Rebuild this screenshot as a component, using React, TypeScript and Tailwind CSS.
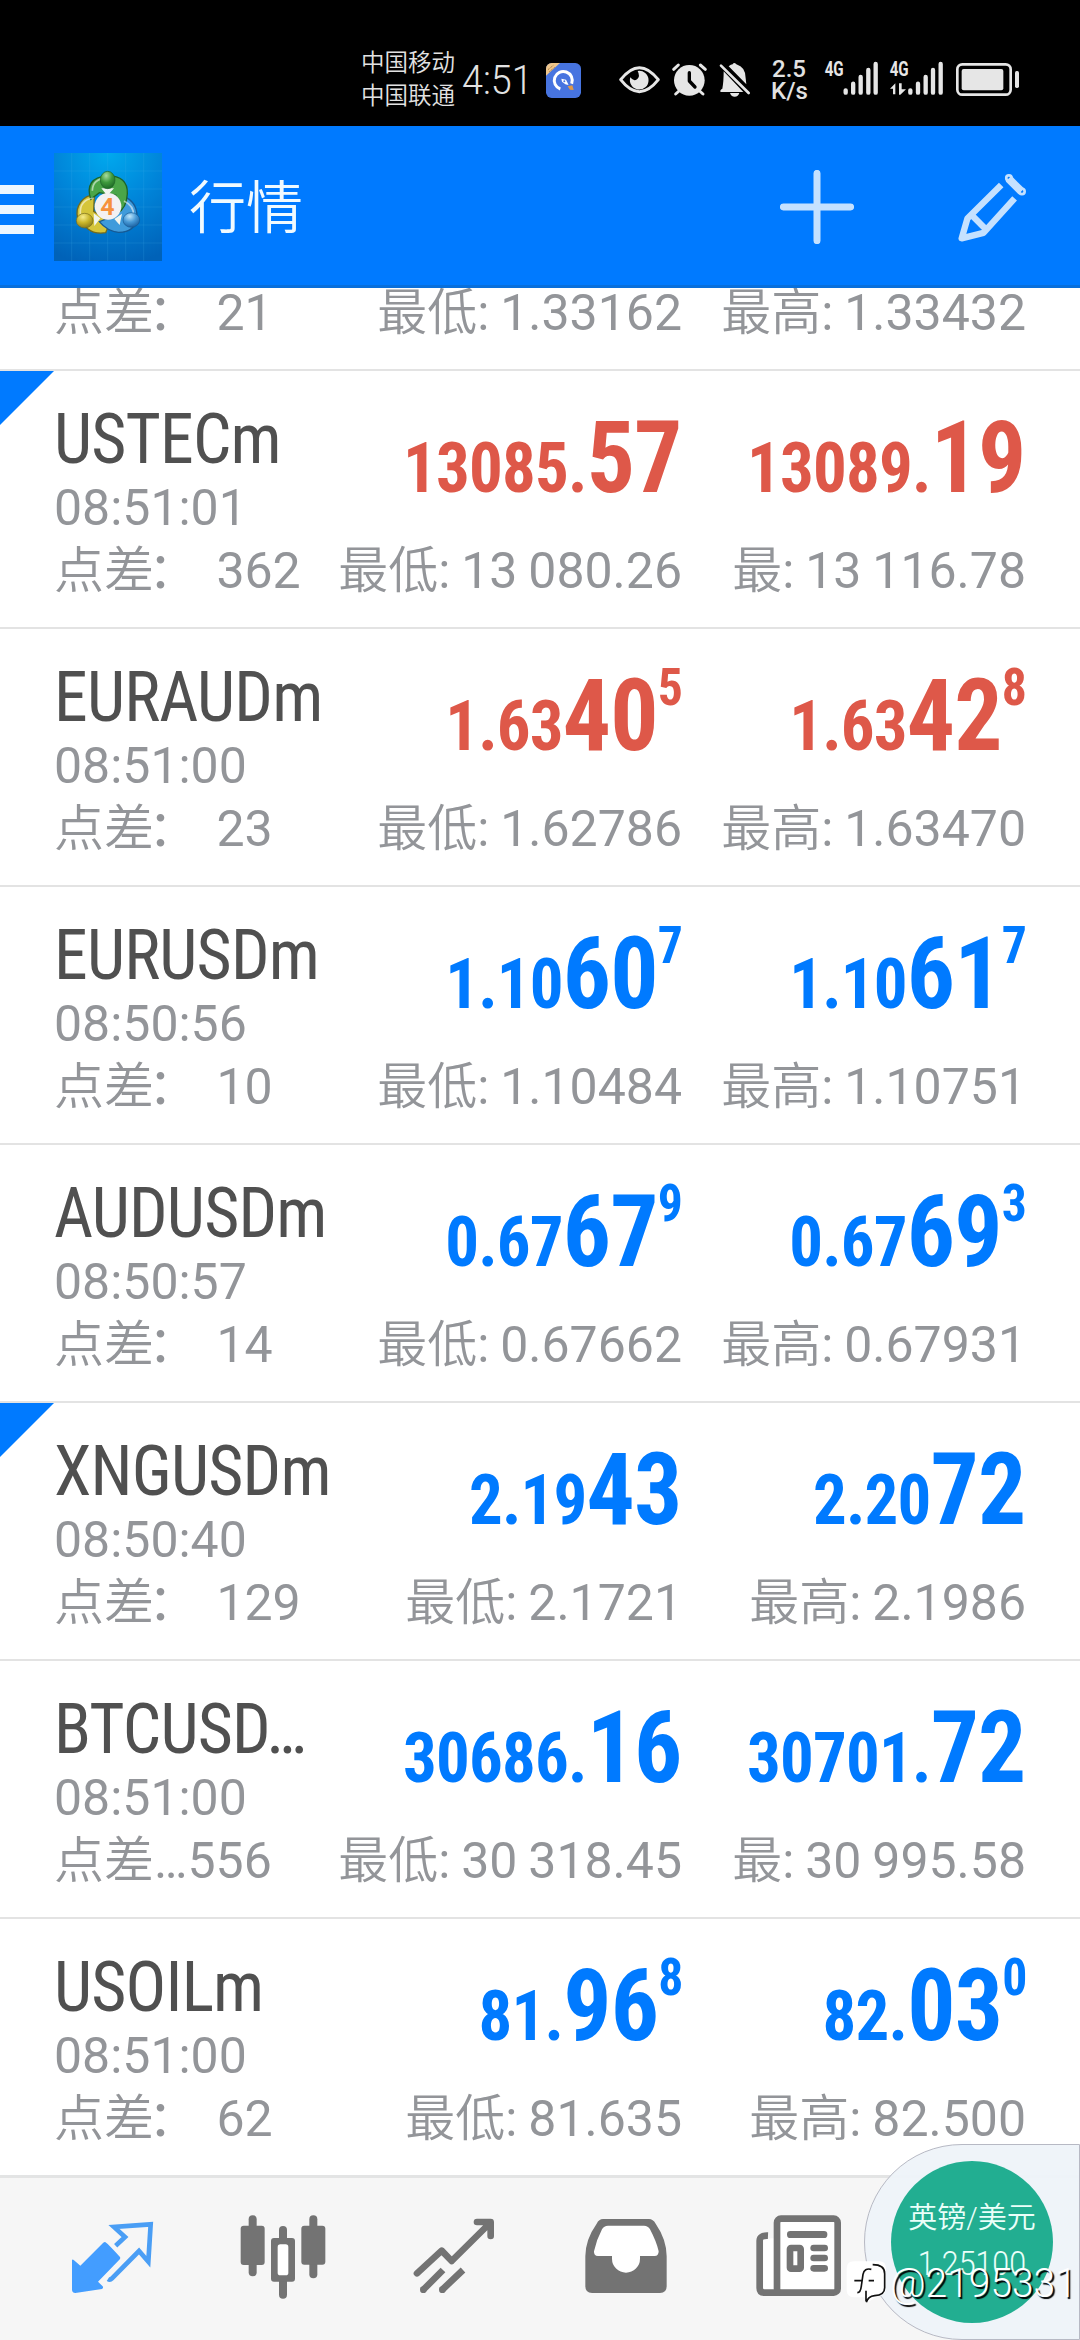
import clsx from "clsx";
import type { ReactNode } from "react";

type Price = { base: string; big: string; sup?: string };

// label and value are kept apart because the labels are set lighter
type Field = [label: string, value: string];

type Quote = {
  symbol: string;
  time: string;
  spread: Field;
  bid: Price;
  ask: Price;
  low: Field;
  high: Field;
  down?: boolean;
  marked?: boolean;
};

const quotes: Quote[] = [
  { symbol: "USTECm", time: "08:51:01", spread: ["点差", "： 362"], bid: { base: "13085.", big: "57" }, ask: { base: "13089.", big: "19" }, low: ["最低", ": 13 080.26"], high: ["最", ": 13 116.78"], down: true, marked: true },
  { symbol: "EURAUDm", time: "08:51:00", spread: ["点差", "： 23"], bid: { base: "1.63", big: "40", sup: "5" }, ask: { base: "1.63", big: "42", sup: "8" }, low: ["最低", ": 1.62786"], high: ["最高", ": 1.63470"], down: true },
  { symbol: "EURUSDm", time: "08:50:56", spread: ["点差", "： 10"], bid: { base: "1.10", big: "60", sup: "7" }, ask: { base: "1.10", big: "61", sup: "7" }, low: ["最低", ": 1.10484"], high: ["最高", ": 1.10751"] },
  { symbol: "AUDUSDm", time: "08:50:57", spread: ["点差", "： 14"], bid: { base: "0.67", big: "67", sup: "9" }, ask: { base: "0.67", big: "69", sup: "3" }, low: ["最低", ": 0.67662"], high: ["最高", ": 0.67931"] },
  { symbol: "XNGUSDm", time: "08:50:40", spread: ["点差", "： 129"], bid: { base: "2.19", big: "43" }, ask: { base: "2.20", big: "72" }, low: ["最低", ": 2.1721"], high: ["最高", ": 2.1986"], marked: true },
  { symbol: "BTCUSD…", time: "08:51:00", spread: ["点差", "…556"], bid: { base: "30686.", big: "16" }, ask: { base: "30701.", big: "72" }, low: ["最低", ": 30 318.45"], high: ["最", ": 30 995.58"] },
  { symbol: "USOILm", time: "08:51:00", spread: ["点差", "： 62"], bid: { base: "81.", big: "96", sup: "8" }, ask: { base: "82.", big: "03", sup: "0" }, low: ["最低", ": 81.635"], high: ["最高", ": 82.500"] },
];

function StatusIcon({ viewBox, className, children }: { viewBox: string; className: string; children: ReactNode }) {
  return (
    <svg viewBox={viewBox} className={clsx("h-12 shrink-0", className)} fill="#e6e6e6">
      {children}
    </svg>
  );
}

function StatusBar() {
  return (
    <div className="flex h-[126px] items-center bg-black pt-[34px] pl-[361px] text-[#e2e2e2]">
      <div className="w-[101px] shrink-0 text-[23.5px] leading-[33px] font-[350] whitespace-nowrap">
        <p>中国移动</p>
        <p>中国联通</p>
      </div>
      <div className="w-[84px] shrink-0 text-[41px] leading-[48px] font-[350]">
        <span className="inline-block origin-left scale-x-[0.92]">4:51</span>
      </div>
      <svg viewBox="618 96 105 105" className="h-[35px] w-[35px] shrink-0">
        <rect x="618" y="96" width="105" height="105" rx="17" fill="#4774e0" />
        <path d="M618 134V113a17 17 0 0 1 17-17h25Z" fill="#efc68a" />
        <path d="M624 116l16-13M628 122l16-13" stroke="#a57a45" strokeWidth="3" strokeDasharray="4 2" />
        <path d="M661 174a27 27 0 1 1 34-16" fill="none" stroke="#fff" strokeWidth="9" />
        <path d="M664 143l14 3 8 16-10-2-10-8Z" fill="#fff" />
        <circle cx="673" cy="151" r="3" fill="#4774e0" />
        <path d="M683 166l14-3 4 14-11-1Z" fill="#e09a48" />
      </svg>
      <StatusIcon viewBox="828 78 144 144" className="ml-[35px] w-12">
        <path d="M842 149q56-72 113 0q-57 72-113 0Z" fill="none" stroke="#e6e6e6" strokeWidth="9" strokeLinejoin="round" />
        <path d="M893 123a28 28 0 1 1-22 19q10 14 21 5q9-9 1-24Z" />
      </StatusIcon>
      <StatusIcon viewBox="984 78 132 144" className="ml-1 w-11">
        <circle cx="1048" cy="151" r="46" />
        <path d="M1001 118l14-13M1081 105l15 13M1017 183l-10 9M1079 183l10 9" stroke="#e6e6e6" strokeWidth="9" strokeLinecap="round" />
        <path d="M1048 128v25l17 18" fill="none" stroke="#000" strokeWidth="10" strokeLinecap="round" strokeLinejoin="round" />
      </StatusIcon>
      <StatusIcon viewBox="48 78 114 144" className="ml-1 w-[38px]">
        <path d="M71 124l59 62H62q-4-5 5-10q4-20 4-52ZM86 109q7-6 12-6q4-8 11 0q28 8 28 42l2 18Z" />
        <path d="M90 189h28q-3 11-14 11t-14-11Z" />
        <path d="M63 107l83 82" stroke="#e6e6e6" strokeWidth="8" strokeLinecap="round" />
      </StatusIcon>
      <div className="ml-[17px] w-[51px] shrink-0 text-[24px] leading-[22px] font-medium">
        <p className="pl-px">2.5</p>
        <p>K/s</p>
      </div>
      <StatusIcon viewBox="366 78 174 144" className="w-[58px]">
        <text x="374" y="139" fontSize="58" fontWeight="700" textLength="57" lengthAdjust="spacingAndGlyphs">4G</text>
        <path d="M437 181v7M459.500 161v27M482 141v47M505 120v68M527 102v86" stroke="#e6e6e6" strokeWidth="13" strokeLinecap="round" />
      </StatusIcon>
      <StatusIcon viewBox="558 78 180 144" className="ml-1.5 w-[60px]">
        <text x="569" y="139" fontSize="58" fontWeight="700" textLength="57" lengthAdjust="spacingAndGlyphs">4G</text>
        <path d="M631 181v7M654 161v27M677 141v47M699 120v68M722 102v86" stroke="#e6e6e6" strokeWidth="13" strokeLinecap="round" />
        <path d="M586 160v33h-7v-17h-9ZM597 160h8v18h13l-17 16h-4Z" />
      </StatusIcon>
      <StatusIcon viewBox="756 78 210 144" className="ml-1.5 w-[70px]">
        <rect x="772" y="103" width="160" height="91" rx="15" fill="none" stroke="#e6e6e6" strokeWidth="8" />
        <rect x="785" y="117" width="125" height="64" rx="6" />
        <rect x="945" y="123" width="12" height="51" rx="5" />
      </StatusIcon>
    </div>
  );
}

function AppLogo() {
  return (
    <svg viewBox="162 99 324 324" className="h-[108px] w-[108px] shrink-0">
      <defs>
        <radialGradient id="sky" cx="0.5" cy="0" r="1.05">
          <stop offset="0" stopColor="#00a9ee" />
          <stop offset="0.5" stopColor="#0083d8" />
          <stop offset="1" stopColor="#0062b8" />
        </radialGradient>
        <radialGradient id="green" cx="0.4" cy="0.25" r="0.8">
          <stop offset="0" stopColor="#a9dca0" />
          <stop offset="0.5" stopColor="#3f9a3c" />
          <stop offset="1" stopColor="#1b6425" />
        </radialGradient>
        <radialGradient id="gold" cx="0.4" cy="0.25" r="0.8">
          <stop offset="0" stopColor="#f6ec8a" />
          <stop offset="0.5" stopColor="#c9b52a" />
          <stop offset="1" stopColor="#85761b" />
        </radialGradient>
        <radialGradient id="azure" cx="0.4" cy="0.25" r="0.8">
          <stop offset="0" stopColor="#bfe6fb" />
          <stop offset="0.5" stopColor="#4799d6" />
          <stop offset="1" stopColor="#175a9a" />
        </radialGradient>
      </defs>
      <rect x="162" y="99" width="324" height="324" fill="url(#sky)" />
      <path d="M215 99v324M269 99v324M323 99v324M377 99v324M431 99v324M162 153h324M162 207h324M162 261h324M162 315h324M162 369h324" stroke="#46b1ec" strokeOpacity="0.28" strokeWidth="2" />
      <g strokeWidth="4">
        <path d="M283 224a56 56 0 0 0-50 70l30 32q20 17 54 12l14-34-50-30Z" fill="#d5c53a" stroke="#746b1c" />
        <path d="M371 229q40 16 40 60q-4 48-55 48q-34-3-58-32l50-20Z" fill="#3f9bdb" stroke="#165993" />
        <path d="M272 238q-20-64 50-71q62 1 60 54q-2 44-32 61l-2-56-50-8Z" fill="#4aa548" stroke="#1d6427" />
      </g>
      <path d="M241 283q-3-44 40-49M372 243q31 15 28 43M277 212q1-35 39-37" fill="none" stroke="#fff" strokeOpacity="0.55" strokeWidth="5" />
      <path d="M281 280l20 15-18 23ZM304 205h38l-20 22ZM366 281l-7 34-16-18Z" fill="#f1f5ef" />
      <ellipse cx="323" cy="180" rx="22" ry="26" fill="url(#green)" stroke="#1d6427" strokeWidth="2" />
      <ellipse cx="254" cy="302" rx="25" ry="22" fill="url(#gold)" stroke="#746b1c" strokeWidth="2" />
      <ellipse cx="394" cy="300" rx="25" ry="22" fill="url(#azure)" stroke="#165993" strokeWidth="2" />
      <circle cx="324" cy="259" r="40" fill="#f3f1f2" />
      <text x="301" y="285" fontSize="72" fontWeight="700" fill="#f6913c" textLength="43" lengthAdjust="spacingAndGlyphs">4</text>
    </svg>
  );
}

function Header() {
  return (
    <header className="flex h-[162px] items-center bg-[#007aff] shadow-[inset_0_-3px_0_#086fdb]">
      <div className="flex w-[34px] flex-col gap-[11px] pt-[5px]">
        <span className="h-[9px] bg-[#edf6ff]" />
        <span className="h-[9px] bg-[#edf6ff]" />
        <span className="h-[9px] bg-[#edf6ff]" />
      </div>
      <div className="ml-5">
        <AppLogo />
      </div>
      <h1 className="ml-[27px] pt-[3px] text-[57px] leading-[80px] font-[350] text-[#f0faff]">行情</h1>
      <svg viewBox="120 120 222 222" className="ml-auto h-[74px] w-[74px]" stroke="#c5e1ff" strokeWidth="21" strokeLinecap="round">
        <path d="M231 130v202M130 231h202" />
      </svg>
      <svg viewBox="655 126 206 206" className="mr-[53px] ml-[104px] h-[69px] w-[69px]" fill="none" stroke="#c5e1ff">
        <path d="M784 162L683 262L666 321L731 305L824 202" strokeWidth="19" strokeLinejoin="round" />
        <path d="M698 254l40 40" strokeWidth="19" />
        <path d="M806 143L844 181" strokeWidth="24" />
        <circle cx="807" cy="141" r="4" strokeWidth="16" />
        <circle cx="846" cy="181" r="4" strokeWidth="16" />
      </svg>
    </header>
  );
}

function PriceTag({ price }: { price: Price }) {
  return (
    <div className="flex justify-end pt-[47px] text-[70px] leading-[100px] font-bold whitespace-nowrap [font-stretch:75%]">
      <span className="origin-right scale-x-[0.955] tracking-[-0.012em]">
        {price.base}
        <span className="text-[100px] leading-[0]">{price.big}</span>
        {price.sup && <span className="align-[45px] text-[52px] leading-[0]">{price.sup}</span>}
      </span>
    </div>
  );
}

function FieldText({ field, className }: { field: Field; className?: string }) {
  const [label, value] = field;
  const wideColon = value.startsWith("：");
  return (
    <span className={className}>
      <span className="font-[350]">{label}</span>
      {wideColon && <span className="mr-[6px] -ml-[6px]">：</span>}
      {wideColon ? value.slice(1) : value}
    </span>
  );
}

function Details({ spread, low, high }: { spread: Field; low: Field; high: Field }) {
  return (
    <div className="grid grid-cols-[270px_358px_344px] text-[50px] leading-[63px] whitespace-nowrap text-[#939599]">
      <FieldText field={spread} />
      <FieldText field={low} className="justify-self-end [word-spacing:-1.5px]" />
      <FieldText field={high} className="justify-self-end [word-spacing:-1.5px]" />
    </div>
  );
}

function QuoteRow({ quote }: { quote: Quote }) {
  return (
    <li className="relative h-[258px] border-b-2 border-[#e3e3e3] pl-[54px]">
      {quote.marked && <span className="absolute top-0 left-0 h-[54px] w-[54px] bg-[#007aff] [clip-path:polygon(0_0,100%_0,0_100%)]" />}
      <div className="grid h-[169px] grid-cols-[270px_358px_344px]">
        <div className="pt-8 whitespace-nowrap">
          <p className="origin-left scale-x-[0.955] text-[71px] leading-[72px] tracking-[-0.012em] text-[#505050] [font-stretch:75%]">{quote.symbol}</p>
          <p className="text-[50px] leading-[66px] text-[#939599]">{quote.time}</p>
        </div>
        <div className={quote.down ? "text-[#de5849]" : "text-[#007aff]"}>
          <PriceTag price={quote.bid} />
        </div>
        <div className={quote.down ? "text-[#de5849]" : "text-[#007aff]"}>
          <PriceTag price={quote.ask} />
        </div>
      </div>
      <Details spread={quote.spread} low={quote.low} high={quote.high} />
    </li>
  );
}

function TabIcon({ viewBox, children }: { viewBox: string; children: ReactNode }) {
  return (
    <svg viewBox={viewBox} className="h-[100px] w-[100px] shrink-0" fill="#737373">
      {children}
    </svg>
  );
}

function TabBar() {
  return (
    <nav className="flex h-[165px] gap-[72px] border-t-[3px] border-[#e3e4e4] bg-[#f6f6f6] pt-[29px] pl-[62px]">
      <TabIcon viewBox="186 141 300 300">
        <path d="M315 246q4 0 45 45q2 4-2 8l-64 66l14 14q3 5-2 8l-80 12q-9 0-10-9v-90q2-3 6 1l19 16l68-68q3-3 6-3Z" fill="#439dff" />
        <path d="M347 257L375 231L342 201L452 193L445 305L417 273L336 355Q330 361 324 357" fill="none" stroke="#4a9ef5" strokeWidth="14" />
      </TabIcon>
      <TabIcon viewBox="702 141 300 300">
        <rect x="746" y="166" width="24" height="183" rx="12" />
        <rect x="722" y="197" width="72" height="118" rx="9" />
        <rect x="928" y="166" width="24" height="189" rx="12" />
        <rect x="904" y="197" width="72" height="117" rx="9" />
        <rect x="837" y="198" width="24" height="218" rx="12" />
        <rect x="813" y="234" width="72" height="131" rx="9" />
        <rect x="833" y="253" width="32" height="93" rx="8" fill="#fff" />
      </TabIcon>
      <TabIcon viewBox="138 141 300 300">
        <g fill="none" stroke="#737373" strokeWidth="20" strokeLinejoin="round">
          <path d="M171 340L245 272L275 303L390 189M351 186H392V228" strokeLinecap="round" />
          <path d="M189 390L249 330M246 390L309 330" />
        </g>
        <circle cx="190" cy="389" r="10" />
        <circle cx="247" cy="389" r="10" />
      </TabIcon>
      <TabIcon viewBox="654 141 300 300">
        <path d="M729 177H867q12 0 20 14q33 48 33 98v90q0 20-20 20H696q-20 0-20-20v-90q0-50 34-98q7-14 19-14Z" />
        <path d="M744 197H852q12 0 18 11q20 38 26 66q0 14-12 14H840v8a42 42 0 0 1-84 0v-8H714q-13 0-12-14q8-36 24-66q6-11 18-11Z" fill="#fff" />
      </TabIcon>
      <TabIcon viewBox="90 231 300 300">
        <path d="M130 325h35v155h-35Z" fill="#fff" />
        <path d="M144 317q-25-1-25 15V474q0 14 14 14h60" fill="none" stroke="#737373" strokeWidth="20" />
        <rect x="171" y="266" width="182" height="222" rx="12" fill="#fff" stroke="#737373" strokeWidth="20" />
        <rect x="201" y="303" width="121" height="21" rx="10" />
        <rect x="210" y="354" width="32" height="62" rx="3" fill="#fff" stroke="#737373" strokeWidth="20" />
        <rect x="271" y="344" width="53" height="20" rx="10" />
        <rect x="271" y="374" width="53" height="20" rx="10" />
        <rect x="271" y="405" width="53" height="20" rx="10" />
      </TabIcon>
    </nav>
  );
}

function FloatingRate() {
  return (
    <div className="absolute right-0 bottom-0 flex h-[196px] w-[216px] items-center rounded-l-full border border-[#b7b9c4] bg-[#eef3f9]/95 pl-[26px]">
      <div className="flex h-[162px] w-[162px] flex-col items-center rounded-full bg-[#22ae91] pt-[38px] text-[#eafff9]">
        <span className="text-[29px] leading-[38px] font-[350] whitespace-nowrap">英镑/美元</span>
        <span className="mt-[8px] text-[33px] leading-[38px] font-light">
          <span className="inline-block scale-x-[0.92]">1.25100</span>
        </span>
      </div>
    </div>
  );
}

function Watermark() {
  return (
    <div className="absolute right-0 bottom-[31px] flex h-[52px] w-[234px] items-center">
      <svg viewBox="378 394 126 138" className="h-[46px] w-[42px] shrink-0">
        <path d="M402 398H478q20 0 20 22v60q-2 20-24 23l-35 20v-17H402q-22 0-22-22V420q0-22 22-22Z" fill="#fff" />
        <path d="M403 456h24M446 456h16M412 492q10 0 12-20l5-35q4-20 25-15M458 408q36 0 36 27v42q0 22-30 24q-20 2-25 20M438 486v32" fill="none" stroke="#111" strokeWidth="5" />
      </svg>
      <span className="ml-[2px] origin-left scale-x-[0.95] text-[41px] leading-[52px] font-[350] text-white [text-shadow:2px_2px_1px_#000]">@2195331</span>
    </div>
  );
}

export default function App() {
  return (
    <main className="relative flex h-[2340px] w-[1080px] flex-col overflow-hidden bg-white [font-family:Roboto,'Noto_Sans_CJK_SC',sans-serif]">
      <StatusBar />
      <Header />
      <ul className="h-[1887px] overflow-hidden">
        <li className="h-[83px] overflow-hidden border-b-2 border-[#e3e3e3] pl-[54px]">
          <div className="-mt-[6px]">
            <Details spread={["点差", "： 21"]} low={["最低", ": 1.33162"]} high={["最高", ": 1.33432"]} />
          </div>
        </li>
        {quotes.map((quote) => (
          <QuoteRow key={quote.symbol} quote={quote} />
        ))}
      </ul>
      <TabBar />
      <FloatingRate />
      <Watermark />
    </main>
  );
}
